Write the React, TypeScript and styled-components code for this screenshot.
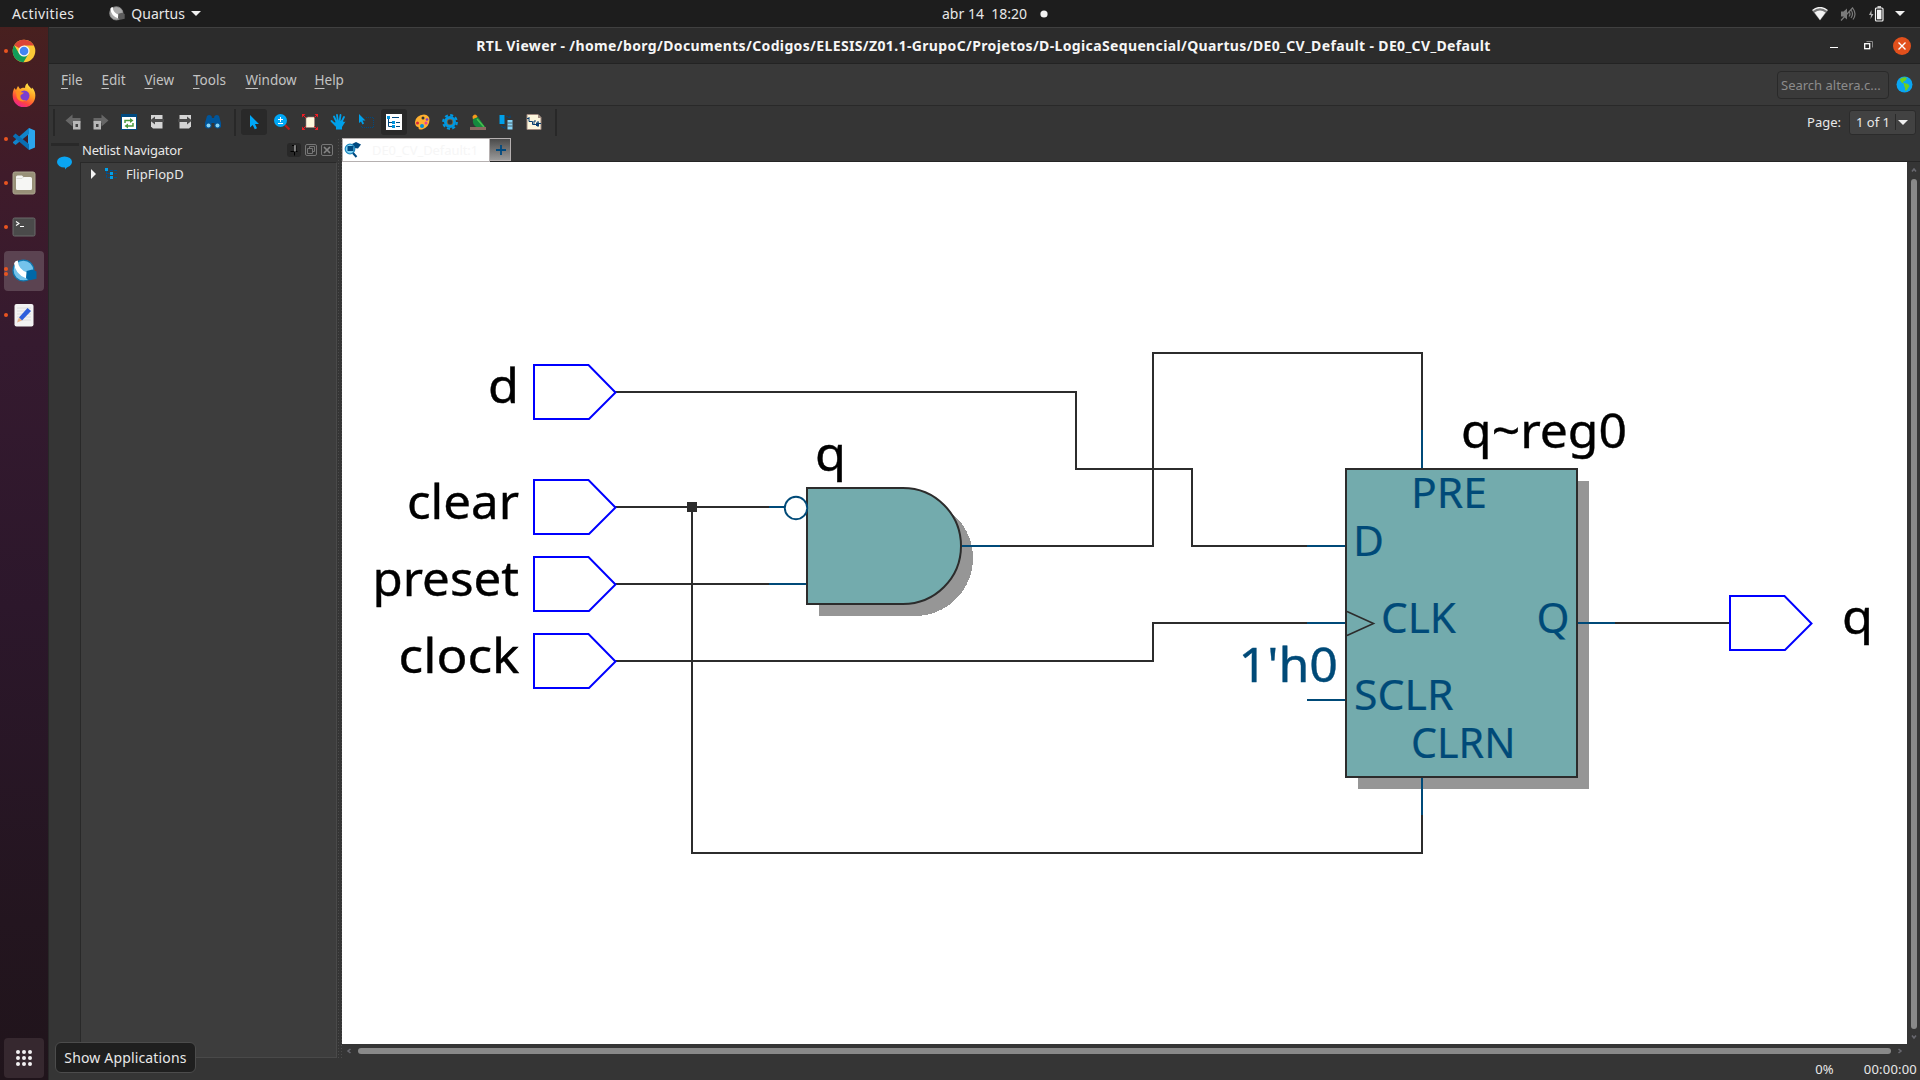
import React from "react";
import styled, { createGlobalStyle } from "styled-components";

const Global = createGlobalStyle`
  *{box-sizing:border-box}
  html,body{margin:0;padding:0;background:#353535;overflow:hidden}
  body{font-family:"Noto Sans","Open Sans",sans-serif;font-size:13px;color:#e8e8e8}
  svg{display:block;flex:none}
`;

const Desktop = styled.div`
  width: 1920px; height: 1080px; display: flex; flex-direction: column; overflow: hidden; position: relative;
`;
const Label = styled.span<{ $size?: number; $sp?: number; $color?: string; $bold?: boolean }>`
  font-size: ${p => p.$size ?? 13}px; letter-spacing: ${p => p.$sp ?? 0}px; color: ${p => p.$color ?? "#e8e8e8"};
  font-weight: ${p => (p.$bold ? 700 : 400)}; white-space: pre; line-height: 20px;
`;
const TopBar = styled.header`
  height: 27px; flex: none; background: #1d1d1d; display: grid; grid-template-columns: 1fr auto 1fr; align-items: center;
  padding: 0 15px 0 12px;
`;
const TopLeft = styled.div`display: flex; align-items: center; height: 27px;`;
const AppMenu = styled.div`display: flex; align-items: center; gap: 6px; margin-left: 35px;`;
const Clock = styled.div`display: flex; align-items: center; gap: 13px; padding-left: 73px;`;
const Tray = styled.div`display: flex; align-items: center; justify-content: flex-end;`;
const Below = styled.div`flex: 1; display: flex; min-height: 0;`;
const Dock = styled.nav`
  width: 48px; flex: none; padding: 4px 4px 2px; display: flex; flex-direction: column; gap: 4px;
  background: linear-gradient(180deg, #48201f 0%, #3f1b2a 14%, #351a2f 30%, #2c172b 55%, #23151f 85%, #20141b 100%);
`;
const DockItem = styled.div<{ $bg?: string }>`
  width: 40px; height: 40px; border-radius: 4px; position: relative; display: flex; align-items: center; justify-content: center;
  background: ${p => p.$bg ?? "transparent"};
`;
const Dots = styled.div`
  position: absolute; left: 0; top: 0; height: 40px; display: flex; flex-direction: column; justify-content: center; gap: 1px;
`;
const RunDot = styled.i`width: 4px; height: 4px; border-radius: 2px; background: #e95420;`;
const Spacer = styled.div`flex: 1;`;
const Window = styled.main`
  flex: 1; min-width: 0; display: flex; flex-direction: column; background: #353535; border-left: 1px solid #272727;
`;
const TitleBar = styled.div`
  height: 37px; flex: none; background: #2c2c2c; border-top: 1px solid #404040; border-bottom: 1px solid #232323;
  display: grid; grid-template-columns: 1fr auto 1fr; align-items: center; padding: 0 9px 0 7px;
`;
const WinButtons = styled.div`display: flex; justify-content: flex-end; align-items: center;`;
const MenuBar = styled.div`
  height: 42px; flex: none; background: #393939; border-bottom: 1px solid #292929; display: flex; align-items: center; padding: 0 7px 0 12px;
`;
const Menus = styled.div`display: flex; height: 41px; padding-top: 6px; flex: 1;`;
const MenuItem = styled.div<{ $w: number }>`
  width: ${p => p.$w}px; line-height: 20px; font-size: 13.5px; color: #c3c3c3; white-space: nowrap;
`;
const Key = styled.span`text-decoration: underline; text-underline-offset: 3px; text-decoration-thickness: 1px;`;
const Search = styled.div`
  width: 112px; height: 28px; border: 1px solid #292929; border-radius: 4px; background: #3a3a3a; display: flex; align-items: center; padding: 0 3px;
  margin-right: 7px;
`;
const ToolBar = styled.div`
  height: 32px; flex: none; background: #353535; display: flex; align-items: center; padding: 0 4px 0 4px;
`;
const Sep = styled.i<{ $l?: number; $r?: number }>`
  width: 2px; height: 27px; background: #282828; margin: 0 ${p => p.$r ?? 5}px 0 ${p => p.$l ?? 5}px;
`;
const Tool = styled.div<{ $on?: boolean }>`
  width: 26px; height: 26px; margin: 0 1px; border-radius: 3px; display: flex; align-items: center; justify-content: center;
  background: ${p => (p.$on ? "#292929" : "transparent")};
`;
const Combo = styled.div`
  width: 67px; height: 25px; border-radius: 3px; background: #424242; border: 1px solid #2b2b2b; display: flex; align-items: center; margin-left: 8px;
  padding-left: 6px;
`;
const ComboArrow = styled.div`
  margin-left: auto; width: 20px; height: 16px; border-left: 1px solid #2a2a2a; display: flex; align-items: center; padding-left: 2px;
`;
const Work = styled.div`flex: 1; display: flex; min-height: 0; background: #353535;`;
const SideStrip = styled.div`
  width: 31px; display: flex; flex-direction: column; align-items: center; padding-top: 5px;
`;
const StripHandle = styled.i`width: 28px; height: 3px; background: #292929; margin-bottom: 10px;`;
const Navigator = styled.aside`width: 257px; display: flex; flex-direction: column; height: 920px;`;
const NavHead = styled.div`height: 24px; display: flex; align-items: center; padding: 0 4px 0 2px; flex: none;`;
const PinButton = styled.div`
  width: 14px; height: 14px; background: #282828; border-radius: 3px; margin-left: auto; margin-right: 4px; display: flex; justify-content: center; align-items: center;
`;
const Tree = styled.div`
  flex: 1; background: #3d3d3d; border: 1px solid #292929; border-right-color: #494949; border-bottom-color: #494949; padding: 0 0 0 10px;
`;
const TreeRow = styled.div`display: flex; align-items: center; height: 22px;`;
const Splitter = styled.div`
  width: 5px; height: 920px; background-image: radial-gradient(#4b4b4b 0.8px, transparent 1px); background-size: 3px 3px;
`;
const Viewer = styled.section`flex: 1; min-width: 0; display: flex; flex-direction: column;`;
const TabRow = styled.div`height: 24px; flex: none; display: flex; border-bottom: 1px solid #252525;`;
const Tab = styled.div`
  width: 148px; height: 24px; background: #fff; border: 1px solid #b5b0b0; display: flex; align-items: center; padding-left: 1px;
`;
const AddTab = styled.div`
  width: 21px; height: 23px; border: 1px solid #b5b0b0; border-left: 0; background: linear-gradient(#4b4b4b, #9a9a9a); display: flex; align-items: center; justify-content: center;
  padding-left: 1px;
`;
const CanvasRow = styled.div`display: flex; height: 882px; flex: none;`;
const Canvas = styled.div`width: 1565px; height: 882px; background: #fff;`;
const VScroll = styled.div`
  width: 13px; display: flex; flex-direction: column; align-items: center; padding: 5px 0 4px; justify-content: space-between;
`;
const HScroll = styled.div`
  height: 13px; width: 1565px; display: flex; align-items: center; padding: 0 4px; justify-content: space-between;
`;
const Thumb = styled.i<{ $w: number; $h: number }>`
  width: ${p => p.$w}px; height: ${p => p.$h}px; border-radius: 3px; background: #898989;
`;
const Status = styled.div`flex: 1; display: flex; align-items: center; justify-content: flex-end; gap: 30px; padding: 1px 3px 0;`;
const Tooltip = styled.div`
  position: absolute; left: 55px; top: 1042px; width: 141px; height: 31px; border-radius: 6px; background: #1f1f1f; border: 1px solid #4c4c4c;
  display: flex; align-items: center; justify-content: center;
`;

const Caret = ({ w = 10 }: { w?: number }) => (
  <svg width={w} height={w / 2} viewBox="0 0 10 5"><path d="M0 0H10L5 5Z" fill="#f0f0f0" /></svg>
);

const ScrollArrow = ({ d }: { d: string }) => (
  <svg width="6" height="6" viewBox="0 0 6 6"><path d={d} fill="none" stroke="#68686f" strokeWidth="1.6" /></svg>
);

const GlobeMark = ({ size, grey }: { size: number; grey?: boolean }) => (
  <svg width={size} height={size} viewBox="0 0 24 24">
    <circle cx="11" cy="11" r="10" fill={grey ? "#a8a8a8" : "#74c3ec"} stroke={grey ? "#8a8a8a" : "#0f76ae"} strokeWidth="1.200" />
    <path d="M2 4Q3 1.500 5.500 1.500Q6 10 14.500 13L13.500 18.500Q3 14.500 2 4Z" fill="#fff" />
    <path d="M14 11.500L19.500 10L23.500 12V19L17 20.500L13.500 18.500Z" fill={grey ? "#5c5c5c" : "#0068a8"} />
  </svg>
);

const ChromeIcon = () => (
  <svg width="24" height="24" viewBox="0 0 24 24">
    <circle cx="12" cy="12" r="11.300" fill="#fbc937" />
    <path d="M12 12L2.200 6.300A11.300 11.300 0 0 1 21.800 6.500H12Z" fill="#dc4437" />
    <path d="M2.200 6.300L7.200 14.800L12 17.500L16.500 14.800L11.500 23.300A11.300 11.300 0 0 1 2.200 6.300Z" fill="#119d59" />
    <circle cx="12" cy="12" r="5.600" fill="#f5f5f5" /><circle cx="12" cy="12" r="4.300" fill="#4285f4" />
  </svg>
);
const FirefoxIcon = () => (
  <svg width="24" height="24" viewBox="0 0 24 24">
    <defs><linearGradient id="ff" x1="0.8" y1="0" x2="0.3" y2="1"><stop offset="0" stopColor="#fff04a" /><stop offset="0.450" stopColor="#ff9a22" /><stop offset="0.750" stopColor="#ff4440" /><stop offset="1" stopColor="#e8209a" /></linearGradient></defs>
    <path d="M2.500 5L4 7L6 3L8 6C10 4.500 12 4.500 13 5C13 3 14 1 15.500 0.300C16 3 18 4 19.500 6L20 4.500C22.500 7 23.500 10 23.300 13A11.300 11.300 0 0 1 0.700 13C0.500 10 1.200 7 2.500 5Z" fill="url(#ff)" />
    <circle cx="12.300" cy="12.700" r="5.200" fill="#7a3fd0" />
    <path d="M4 8C7 8 8 9.500 12 9.500C11 11.500 9 11 8.500 12.500C8 16 11 18 14.500 17C11 20 5 18 4.500 13Z" fill="#ff9020" />
  </svg>
);
const CodeIcon = () => (
  <svg width="24" height="24" viewBox="0 0 24 24">
    <path d="M17 1L23 3.500V20.500L17 23L16 19V5Z" fill="#2ba5ee" />
    <path d="M17 1V7L3.500 18L1 16V15Z" fill="#1184cb" /><path d="M1 9L3.500 6.500L17 17V23L1 9.500Z" fill="#0a6fb3" />
  </svg>
);
const FilesIcon = () => (
  <svg width="24" height="24" viewBox="0 0 24 24">
    <rect x="1" y="1" width="22" height="22" rx="2" fill="#989078" stroke="#aba58f" />
    <path d="M4 6Q4 4.500 5.500 4.500H10L11.500 6H18.500Q20 6 20 7.500V17.500Q20 19 18.500 19H5.500Q4 19 4 17.500Z" fill="#f6f6f4" /><path d="M4.500 7.500H10L11.500 6" stroke="#d5d5d0" fill="none" strokeWidth="0.800" />
  </svg>
);
const TerminalIcon = () => (
  <svg width="24" height="20" viewBox="0 0 24 20">
    <rect x="1" y="1" width="22" height="18" rx="1.500" fill="#4a4a4a" stroke="#6a6a6a" />
    <path d="M4 4.500L7 6.500L4 8.500M8 9.500H12" stroke="#fff" fill="none" strokeWidth="1.100" />
  </svg>
);
const EditorIcon = () => (
  <svg width="24" height="24" viewBox="0 0 24 24">
    <rect x="2.500" y="1" width="19" height="22.500" rx="2" fill="#f2f2f2" />
    <path d="M5 5H19M5 8H19M5 11H19M5 14H19M5 17H19" stroke="#d8d8d8" strokeWidth="0.800" />
    <path d="M7 14.500L15.500 5L19 8L10 17.500Z" fill="#2d5fdc" /><path d="M7 14.500L10 17.500L5 19.500Z" fill="#e8b287" />
  </svg>
);
const AppsIcon = () => (
  <svg width="18" height="18" viewBox="0 0 18 18">
    {[3, 9, 15].map(y => [3, 9, 15].map(x => <circle key={x + "-" + y} cx={x} cy={y} r="2" fill="#f3f1f2" />))}
  </svg>
);

const HistoryArrow = ({ flip }: { flip?: boolean }) => (
  <svg width="16" height="16" viewBox="0 0 16 16">
    <g transform={flip ? "translate(16 0) scale(-1 1)" : undefined}>
      <path d="M0.500 6.500L7.500 0.500V4H15.500V9H7.500V12.500Z" fill="#666" />
      <rect x="8" y="7" width="7.500" height="8.500" fill="#b9b9b9" /><rect x="10.500" y="10" width="2.500" height="3" fill="#444" />
    </g>
  </svg>
);
const RefreshIcon = () => (
  <svg width="16" height="16" viewBox="0 0 16 16">
    <rect x="0.500" y="0.500" width="15" height="15" fill="#fff" stroke="#004a80" /><rect width="16" height="3" fill="#004a80" />
    <path d="M4 9V6.500H10M12 9V12H6" fill="none" stroke="#4b9a3f" strokeWidth="1.500" /><path d="M9 4L12.500 6.500L9 9ZM7 9.500L3.500 12L7 14.500Z" fill="#4b9a3f" />
  </svg>
);
const PageArrow = ({ flip }: { flip?: boolean }) => (
  <svg width="16" height="16" viewBox="0 0 16 16">
    <g transform={flip ? "translate(16 0) scale(-1 1)" : undefined}>
      <path d="M2 1H13.500V14.500H4L2 12.500Z" fill="#d4d4d4" />
      <path d="M1 6.500L6 2.500V5H15V8H6V10.500Z" fill="#4a4a4a" />
    </g>
  </svg>
);
const Binoculars = () => (
  <svg width="16" height="16" viewBox="0 0 16 16">
    <path d="M2 2Q4 0 6.500 2L7 4H9L9.500 2Q12 0 14 2L16 9V13Q13 16 9.500 13V9H6.500V13Q3 16 0 13V9Z" fill="#00559a" />
    <circle cx="3.500" cy="11.500" r="2" fill="#86d3f5" /><circle cx="12.500" cy="11.500" r="2" fill="#86d3f5" />
  </svg>
);
const Pointer = () => (
  <svg width="16" height="16" viewBox="0 0 16 16"><path d="M4 1V13.500L6.700 11L8.800 15.300L11 14.200L9 10H13Z" fill="#00a8f8" /></svg>
);
const ZoomIcon = () => (
  <svg width="16" height="16" viewBox="0 0 16 16">
    <path d="M11 11L15.500 15.500" stroke="#b31b1b" strokeWidth="2.200" /><circle cx="6.500" cy="6.500" r="6.500" fill="#00a8f8" />
    <path d="M6.500 3V8M4 5.500H9M4 9.500H9" stroke="#fff" strokeWidth="1" />
  </svg>
);
const FitIcon = () => (
  <svg width="16" height="16" viewBox="0 0 16 16">
    <path d="M4 4L6 3H12.500V13.500H4Z" fill="#fdf6dc" stroke="#a08078" strokeWidth="0.600" />
    <path d="M0 0H3.500L0 3.500ZM16 0H12.500L16 3.500ZM0 16H3.500L0 12.500ZM16 16H12.500L16 12.500Z" fill="#f01c24" />
    <path d="M1 1L4 4M15 1L12 4M1 15L4 12M15 15L12 12" stroke="#f01c24" />
  </svg>
);
const HandIcon = () => (
  <svg width="16" height="16" viewBox="0 0 16 16">
    <path d="M7 9L4 2.500M8 8L7 1M9.500 8L10.500 1M11 9L14 3M5.500 11L1.500 7" stroke="#00a0ea" strokeWidth="1.800" strokeLinecap="round" />
    <path d="M4.500 8.500L12 6.500L14 8L15.500 7.500L12 13V15.500H6V13L3 9Z" fill="#00a0ea" />
  </svg>
);
const AreaSelect = () => (
  <svg width="16" height="16" viewBox="0 0 16 16">
    <path d="M1 0V9L3 7.500L4.500 10.500L6 9.500L4.500 6.500H7.500Z" fill="#00a0ea" />
    <path d="M8 3.500H15.500V13.500H3.500V11" fill="none" stroke="#004a80" strokeDasharray="1 1" />
  </svg>
);
const NetlistIcon = () => (
  <svg width="16" height="16" viewBox="0 0 16 16">
    <rect width="16" height="16" fill="#fff" /><path d="M2.500 4V12.500H7M2.500 8.500H7M6 3.500H13M10 8.500H14M10 12.500H14" stroke="#004a80" fill="none" />
    <path d="M1 2H4V5H1ZM6 7H9V10H6ZM6 11H9V14H6Z" fill="#0093dc" />
  </svg>
);
const PaletteIcon = () => (
  <svg width="16" height="16" viewBox="0 0 16 16">
    <path d="M1 8Q2 1 10 0.500Q15.500 1 15.500 6Q15.500 13 8 15.500Q4 16 4.500 13Q1 13 1 8Z" fill="#ffb030" />
    <circle cx="9" cy="4" r="1.500" fill="#353535" /><circle cx="3.500" cy="9" r="1.500" fill="#d8263c" /><circle cx="8" cy="12" r="2" fill="#008ed8" /><circle cx="12" cy="9" r="1.500" fill="#e8409a" /><circle cx="13" cy="5.500" r="1.300" fill="#8638c8" />
  </svg>
);
const GearIcon = () => (
  <svg width="16" height="16" viewBox="0 0 16 16">
    <circle cx="8" cy="8" r="6.800" fill="none" stroke="#0097e0" strokeWidth="2.200" strokeDasharray="3 2.340" /><circle cx="8" cy="8" r="4.400" fill="none" stroke="#0097e0" strokeWidth="3.200" />
    <circle cx="8" cy="8" r="2.900" fill="#353535" stroke="#8c7a50" strokeWidth="0.700" />
  </svg>
);
const BirdIcon = () => (
  <svg width="16" height="16" viewBox="0 0 16 16">
    <path d="M2.500 2.500Q5 -1.500 7.500 2.500L6 6H3Z" fill="#f59a1b" /><path d="M3 5L8 3L15.500 13.500H7Q2 11 3 5Z" fill="#168a3e" /><path d="M7 5L14 13" stroke="#48c04e" strokeWidth="1.500" />
    <rect y="13" width="16" height="3" fill="#8c6a62" />
  </svg>
);
const SwapIcon = () => (
  <svg width="16" height="16" viewBox="0 0 16 16">
    <rect x="1.500" y="1" width="5" height="9" fill="#00a0ea" /><path d="M9.500 6H14.500V15.500H9.500Z" fill="#86d3f5" /><path d="M9.500 9H14.500M9.500 12H14.500" stroke="#353535" strokeWidth="0.700" />
    <path d="M8 2L12 4M12 4V1.500M3 12L7 14.500M7 14.500V12" stroke="#004a80" fill="none" />
  </svg>
);
const SchematicIcon = () => (
  <svg width="16" height="16" viewBox="0 0 16 16">
    <path d="M1 0.500H12L15 3.500V15.500H1Z" fill="#fdf6dc" stroke="#a08a80" /><path d="M1 4.500H3M3 3V7.500H6.500V10.500H11M8 10.500V7H10M12 9.500H15M12 7V13" stroke="#0b3f70" fill="none" /><rect x="10" y="8.500" width="3" height="3.500" fill="#0b3f70" />
    <path d="M12 0.500V4H15.500" fill="#a08a80" />
  </svg>
);

const WIRE = "#2c2c2c";
const NET = "#004a78";

const Txt = styled.text<{ $pin?: boolean }>`
  font-family: "Noto Sans", "Open Sans", sans-serif; font-size: ${p => (p.$pin ? 42 : 48)}px; stroke-width: ${p => (p.$pin ? 0.2 : 0.4)}px;
`;
const Port = ({ x, y }: { x: number; y: number }) => (
  <path d={`M${x} ${y - 27}H${x + 54.500}L${x + 81.500} ${y + 0.500}L${x + 55} ${y + 27}H${x}Z`} fill="#fff" stroke="#00f" strokeWidth="2" />
);
type T = { s: string; x: number; y: number; w: number; pin?: boolean; c?: string };
const labels: T[] = [
  { s: "d", x: 488, y: 403.3, w: 31 },
  { s: "clear", x: 407, y: 518.5, w: 112 },
  { s: "preset", x: 372.5, y: 595.5, w: 146.5 },
  { s: "clock", x: 398.5, y: 672.5, w: 121 },
  { s: "q", x: 815, y: 470.5, w: 31 },
  { s: "q~reg0", x: 1461, y: 448.3, w: 166 },
  { s: "q", x: 1842, y: 634.3, w: 31 },
  { s: "1'h0", x: 1238.5, y: 682.3, w: 99.5, c: NET },
  { s: "PRE", x: 1411, y: 508.3, w: 76, pin: true, c: NET },
  { s: "D", x: 1353, y: 556.3, w: 31, pin: true, c: NET },
  { s: "CLK", x: 1381, y: 633.3, w: 75, pin: true, c: NET },
  { s: "Q", x: 1536.5, y: 633.3, w: 33, pin: true, c: NET },
  { s: "SCLR", x: 1354, y: 710.3, w: 99.5, pin: true, c: NET },
  { s: "CLRN", x: 1411, y: 758.3, w: 104.5, pin: true, c: NET },
];

const Schematic = () => (
  <svg width="1565" height="882" viewBox="342 162 1565 882">
    <g fill="none" stroke={WIRE} strokeWidth="2">
      <path d="M615 392H1076V469H1192V546H1307" />
      <path d="M615 507H769M615 584H769M692 507V853H1422V815" />
      <path d="M615 661H1153V623H1307" />
      <path d="M1000 546H1153V353H1422V430" />
      <path d="M1615 623H1729" />
    </g>
    <rect x="687" y="502" width="10" height="10" fill={WIRE} />
    <path d="M819 500H915A58 58 0 0 1 915 616H819Z" fill="#969696" shapeRendering="crispEdges" />
    <rect x="1358" y="481" width="231" height="308" fill="#969696" />
    <path d="M807 488H903A58 58 0 0 1 903 604H807Z" fill="#73abad" stroke={WIRE} strokeWidth="2" />
    <g fill="none" stroke={NET} strokeWidth="2">
      <path d="M769 507H785M769 584H806M962 546H1000M1307 546H1346M1307 623H1346M1307 700H1346M1577 623H1615M1422 430V469M1422 777V815" />
    </g>
    <circle cx="796" cy="508" r="11.200" fill="#fff" stroke={NET} strokeWidth="1.900" />
    <rect x="1346" y="469" width="231" height="308" fill="#73abad" stroke={WIRE} strokeWidth="2" />
    <path d="M1347 611.500L1373.500 623.500L1347 635.500" fill="none" stroke={WIRE} strokeWidth="1.600" />
    <Port x={534} y={392} /><Port x={534} y={507} /><Port x={534} y={584} /><Port x={534} y={661} /><Port x={1730} y={623} />
    {labels.map((l, i) => (
      <Txt key={i} x={l.x} y={l.y} textLength={l.w} lengthAdjust="spacingAndGlyphs" $pin={l.pin} fill={l.c ?? "#000"} stroke={l.c ?? "#000"}>{l.s}</Txt>
    ))}
  </svg>
);

const menus: [string, number][] = [["File", 40.5], ["Edit", 43], ["View", 48.5], ["Tools", 52.5], ["Window", 69], ["Help", 40]];
const dock = [
  { icon: <ChromeIcon />, dots: 1 }, { icon: <FirefoxIcon />, dots: 0 }, { icon: <CodeIcon />, dots: 1 }, { icon: <FilesIcon />, dots: 1 },
  { icon: <TerminalIcon />, dots: 1 }, { icon: <GlobeMark size={25} />, dots: 2, bg: "#5b4351" }, { icon: <EditorIcon />, dots: 1 },
];

const WifiIcon = styled.svg`margin-right: 12px;`;
const BatteryIcon = styled.svg`margin-right: 11px;`;
const MinimizeIcon = styled.svg`margin-right: 26px;`;
const RestoreIcon = styled.svg`margin-right: 20px;`;
const FloatIcon = styled.svg`margin-right: 4px;`;
const NodeIcon = styled.svg`margin: 0 7px 0 9px;`;
const TabText = styled(Label)`margin-left: 10px;`;

export default function App() {
  return (
    <Desktop>
      <Global />
      <TopBar>
        <TopLeft>
          <Label $size={14} $sp={0.4}>Activities</Label>
          <AppMenu><GlobeMark size={16} grey /><Label $size={14}>Quartus</Label><Caret /></AppMenu>
        </TopLeft>
        <Clock>
          <Label $size={14}>{"abr 14  18:20"}</Label>
          <svg width="8" height="8" viewBox="0 0 8 8"><circle cx="4" cy="4" r="3.600" fill="#f2f2f2" /></svg>
        </Clock>
        <Tray>
          <WifiIcon width="16" height="14" viewBox="0 0 16 14"><path d="M0.500 4Q8 -3 15.500 4L8 13.500Z" fill="#777" /><path d="M2.500 5.500Q8 1.500 13.500 5.500L8 13Z" fill="#f2f2f2" /><path d="M0.500 3.500Q8 -2.500 15.500 3.500" fill="none" stroke="#f2f2f2" strokeWidth="1.300" /></WifiIcon>
          <WifiIcon width="16" height="14" viewBox="0 0 16 14"><path d="M1 4.500H3.500L7 1.500V12.500L3.500 9.500H1Z" fill="#7a7a7a" /><path d="M9 4.500Q11 7 9 9.500M11 3Q14 7 11 11M13 1.500Q17 7 13 12.500M1 13.500L13 0.500" fill="none" stroke="#7a7a7a" strokeWidth="1.200" /></WifiIcon>
          <BatteryIcon width="16" height="16" viewBox="0 0 16 16"><path d="M3.500 4L1 9H3L2.500 13L5.500 8H3.500Z" fill="#b0b0b0" /><rect x="7.500" y="2" width="7.500" height="13" rx="1" fill="none" stroke="#f2f2f2" strokeWidth="1.200" /><rect x="9.500" y="0.200" width="3.500" height="1.500" fill="#f2f2f2" /><rect x="9" y="3.700" width="4.500" height="9.600" fill="#f2f2f2" /></BatteryIcon>
          <Caret />
        </Tray>
      </TopBar>
      <Below>
        <Dock>
          {dock.map((d, i) => (
            <DockItem key={i} $bg={d.bg}>
              <Dots>{Array.from({ length: d.dots }, (_, k) => <RunDot key={k} />)}</Dots>
              {d.icon}
            </DockItem>
          ))}
          <Spacer />
          <DockItem $bg="#36282f"><AppsIcon /></DockItem>
        </Dock>
        <Window>
          <TitleBar>
            <span />
            <Label $size={14} $bold $sp={0.363} $color="#f6f6f6">RTL Viewer - /home/borg/Documents/Codigos/ELESIS/Z01.1-GrupoC/Projetos/D-LogicaSequencial/Quartus/DE0_CV_Default - DE0_CV_Default</Label>
            <WinButtons>
              <MinimizeIcon width="8" height="8" viewBox="0 0 8 8"><rect y="5" width="8" height="1" fill="#fff" /></MinimizeIcon>
              <RestoreIcon width="9" height="9" viewBox="0 0 9 9"><path d="M2.500 0.500H8.500V6.500" fill="none" stroke="#888" /><rect x="0.700" y="2.700" width="5" height="5" fill="none" stroke="#fff" strokeWidth="1.300" /></RestoreIcon>
              <svg width="18" height="18" viewBox="0 0 18 18"><circle cx="9" cy="9" r="9" fill="#e2501c" /><path d="M5.500 5.500L12.500 12.500M12.500 5.500L5.500 12.500" stroke="#fff" strokeWidth="1.400" /></svg>
            </WinButtons>
          </TitleBar>
          <MenuBar>
            <Menus>{menus.map(([m, w]) => <MenuItem key={m} $w={w}><Key>{m[0]}</Key>{m.slice(1)}</MenuItem>)}</Menus>
            <Search><Label $color="#8c8c8c">Search altera.c...</Label></Search>
            <svg width="17" height="17" viewBox="0 0 17 17"><circle cx="8.500" cy="8.500" r="8" fill="#0aa5f2" /><path d="M4 3Q8 0 11 2L9.500 4.500L7 6L8 8L5.500 6.500Q4 6 4 3ZM8 7L12 8L13.500 10L11 14L9 15Q9.500 11 8 10Z" fill="#6fcf1f" /></svg>
          </MenuBar>
          <ToolBar>
            <Sep $l={0} $r={4} />
            <Tool><HistoryArrow /></Tool><Tool><HistoryArrow flip /></Tool><Tool><RefreshIcon /></Tool><Tool><PageArrow /></Tool><Tool><PageArrow flip /></Tool><Tool><Binoculars /></Tool>
            <Sep $l={7} $r={4} />
            <Tool $on><Pointer /></Tool><Tool><ZoomIcon /></Tool><Tool><FitIcon /></Tool><Tool><HandIcon /></Tool><Tool><AreaSelect /></Tool><Tool $on><NetlistIcon /></Tool>
            <Tool><PaletteIcon /></Tool><Tool><GearIcon /></Tool><Tool><BirdIcon /></Tool><Tool><SwapIcon /></Tool><Tool><SchematicIcon /></Tool>
            <Sep $l={7} />
            <Spacer />
            <Label>Page:</Label>
            <Combo><Label>1 of 1</Label><ComboArrow><Caret /></ComboArrow></Combo>
          </ToolBar>
          <Work>
            <SideStrip>
              <StripHandle />
              <svg width="15" height="14" viewBox="0 0 15 14"><ellipse cx="7.500" cy="6" rx="7.500" ry="5.500" fill="#0aa5f2" /><path d="M12 9L8 13.500L8 10Z" fill="#0aa5f2" /></svg>
            </SideStrip>
            <Navigator>
              <NavHead>
                <Label $sp={-0.18}>Netlist Navigator</Label>
                <PinButton><svg width="8" height="12" viewBox="0 0 8 12"><path d="M2 1.500H6V7M0.500 7.500H7.500M4.500 7.500V11.500" stroke="#000" fill="none" /><path d="M5 1V7.500" stroke="#ddd" /></svg></PinButton>
                <FloatIcon width="12" height="12" viewBox="0 0 12 12"><rect x="0.500" y="0.500" width="11" height="11" rx="1.500" fill="none" stroke="#777" /><path d="M4.500 4.500V2.500H9.500V7.500H7.500M2.500 4.500H7.500V9.500H2.500Z" fill="none" stroke="#777" /></FloatIcon>
                <svg width="12" height="12" viewBox="0 0 12 12"><rect x="0.500" y="0.500" width="11" height="11" rx="1.500" fill="none" stroke="#777" /><path d="M3 3L9 9M9 3L3 9" stroke="#858585" strokeWidth="1.700" /></svg>
              </NavHead>
              <Tree>
                <TreeRow>
                  <svg width="5" height="10" viewBox="0 0 5 10"><path d="M0 0L5 5L0 10Z" fill="#f2f2f2" /></svg>
                  <NodeIcon width="14" height="12" viewBox="0 0 14 12"><path d="M1.500 3V9.500H5M5 2.500H13M2 5.500H6M9 5.500H13M9 9.500H13" stroke="#00508c" strokeDasharray="3 1" fill="none" /><path d="M0 0H3V3H0ZM5 4H8V7H5ZM5 8H8V11H5Z" fill="#00a0ea" /></NodeIcon>
                  <Label $sp={0.1}>FlipFlopD</Label>
                </TreeRow>
              </Tree>
            </Navigator>
            <Splitter />
            <Viewer>
              <TabRow>
                <Tab>
                  <svg width="18" height="18" viewBox="0 0 18 18"><path d="M8 3L12 1L17 3.500L14 7.500L10 7Z" fill="#004a80" /><circle cx="6" cy="8" r="4.800" fill="#7fd0f2" stroke="#1a86bd" strokeWidth="1.200" /><rect x="3.500" y="5" width="6" height="5" fill="#004a80" /><path d="M9 12L12.500 16" stroke="#004a80" strokeWidth="2" /></svg>
                  <TabText $color="#f6f6f6" $sp={-0.08}>DE0_CV_Default:1</TabText>
                </Tab>
                <AddTab><svg width="10" height="10" viewBox="0 0 10 10"><path d="M5 0V10M0 5H10" stroke="#004a80" strokeWidth="1.800" /></svg></AddTab>
              </TabRow>
              <CanvasRow>
                <Canvas><Schematic /></Canvas>
                <VScroll><ScrollArrow d="M1 4.500L3 2L5 4.500" /><Thumb $w={6} $h={850} /><ScrollArrow d="M1 1.500L3 4L5 1.500" /></VScroll>
              </CanvasRow>
              <HScroll><ScrollArrow d="M4.500 1L2 3L4.500 5" /><Thumb $w={1533} $h={6} /><ScrollArrow d="M1.500 1L4 3L1.500 5" /></HScroll>
              <Status><Label $sp={0.2}>0%</Label><Label $sp={0.2}>00:00:00</Label></Status>
            </Viewer>
          </Work>
        </Window>
      </Below>
      <Tooltip><Label $size={14} $sp={0.16}>Show Applications</Label></Tooltip>
    </Desktop>
  );
}
